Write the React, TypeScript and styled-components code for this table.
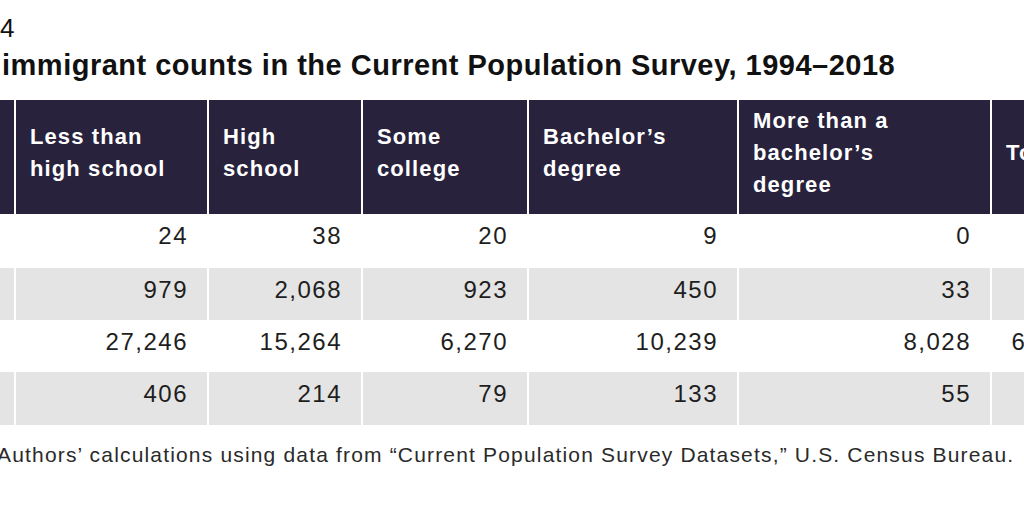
import React from "react";
import styled, { createGlobalStyle } from "styled-components";

const Global = createGlobalStyle`
  html, body { margin: 0; padding: 0; background: #ffffff; }
  body { width: 1024px; height: 512px; overflow: hidden; }
`;

const COLS = "100px 191px 152px 164px 208px 251px 121px";

const Page = styled.div`
  display: flex;
  flex-direction: column;
  padding-top: 13px;
  font-family: "Liberation Sans", Arial, sans-serif;
  color: #111;
`;

const Label = styled.div`
  font-size: 26px;
  line-height: 30px;
  font-weight: 400;
  white-space: nowrap;
`;

const Title = styled.h1`
  margin: 6px 0 0 2px;
  font-size: 29px;
  line-height: 32px;
  font-weight: 700;
  letter-spacing: 0.5px;
  white-space: nowrap;
`;

const Table = styled.div`
  margin-top: 19px;
  margin-left: -86px;
  display: flex;
  flex-direction: column;
`;

const Row = styled.div<{ $h: number }>`
  display: grid;
  grid-template-columns: ${COLS};
  column-gap: 2px;
  height: ${(p) => p.$h}px;
`;

const HeadCell = styled.div`
  background: #28223d;
  color: #ffffff;
  font-weight: 700;
  font-size: 22px;
  line-height: 32px;
  letter-spacing: 1.1px;
  padding: 0 8px 8px 14px;
  display: flex;
  align-items: center;
  white-space: nowrap;
`;

const Cell = styled.div<{ $shade: boolean }>`
  background: ${(p) => (p.$shade ? "#e4e4e4" : "#ffffff")};
  color: #1e1e1e;
  font-size: 24px;
  line-height: 24px;
  letter-spacing: 1.5px;
  padding: 10px 19px 0 0;
  text-align: right;
  white-space: nowrap;
`;

const Footer = styled.p`
  margin: 18px 0 0 -3px;
  font-size: 21px;
  line-height: 24px;
  color: #2a2a2a;
  letter-spacing: 1.17px;
  white-space: nowrap;
`;

const headers: React.ReactNode[] = [
  "",
  <>Less than<br />high school</>,
  <>High<br />school</>,
  <>Some<br />college</>,
  <>Bachelor’s<br />degree</>,
  <>More than a<br />bachelor’s<br />degree</>,
  "Total",
];

const rows: string[][] = [
  ["", "24", "38", "20", "9", "0", "91"],
  ["", "979", "2,068", "923", "450", "33", "4,453"],
  ["", "27,246", "15,264", "6,270", "10,239", "8,028", "67,047"],
  ["", "406", "214", "79", "133", "55", "887"],
];

const heights = [54, 52, 52, 53];

export default function App() {
  return (
    <>
      <Global />
      <Page>
        <Label>4</Label>
        <Title>immigrant counts in the Current Population Survey, 1994–2018</Title>
        <Table>
          <Row $h={114}>
            {headers.map((h, i) => (
              <HeadCell key={i}>
                <span>{h}</span>
              </HeadCell>
            ))}
          </Row>
          {rows.map((r, ri) => (
            <Row key={ri} $h={heights[ri]}>
              {r.map((v, ci) => (
                <Cell key={ci} $shade={ri % 2 === 1}>
                  {v}
                </Cell>
              ))}
            </Row>
          ))}
        </Table>
        <Footer>
          Authors’ calculations using data from “Current Population Survey Datasets,” U.S. Census Bureau.
        </Footer>
      </Page>
    </>
  );
}
